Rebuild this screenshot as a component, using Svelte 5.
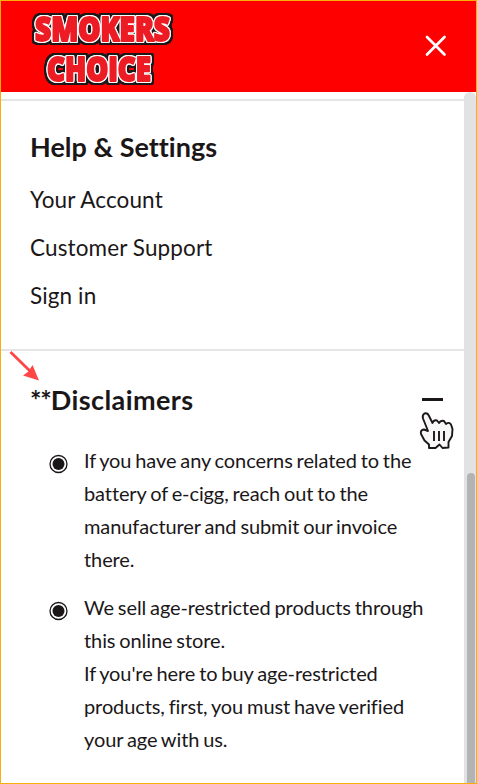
<script>
  const links = ["Your Account", "Customer Support", "Sign in"];

  const disclaimers = [
    [
      "If you have any concerns related to the",
      "battery of e-cigg, reach out to the",
      "manufacturer and submit our invoice",
      "there.",
    ],
    [
      "We sell age-restricted products through",
      "this online store.",
      "If you're here to buy age-restricted",
      "products, first, you must have verified",
      "your age with us.",
    ],
  ];

  let expanded = $state(true);
</script>

<div class="drawer">
  <header class="drawer__header">
    <svg class="logo" width="144" height="78" viewBox="0 0 144 78" role="img" aria-label="Smokers Choice">
      <text x="5" y="31.5" textLength="135" lengthAdjust="spacingAndGlyphs">SMOKERS</text>
      <text x="17" y="71.5" textLength="104" lengthAdjust="spacingAndGlyphs">CHOICE</text>
    </svg>
    <button class="close" aria-label="Close menu">
      <svg width="22" height="22" viewBox="0 0 22 22">
        <path d="M2 2l17.500 17.500M19.500 2L2 19.500" />
      </svg>
    </button>
  </header>

  <div class="drawer__body">
    <div class="content">
      <nav class="section section--help">
        <h2>Help &amp; Settings</h2>
        <ul class="links">
          {#each links as link}
            <li><a href="#menu">{link}</a></li>
          {/each}
        </ul>
      </nav>

      <section class="section section--disclaimers">
        <svg class="arrow" width="34" height="34" viewBox="0 0 34 34" aria-hidden="true">
          <path d="M2.500 2L23 22" fill="none" stroke="#ff4545" stroke-width="2.8" />
          <path d="M31 30.500L15 25.500L20.500 21.500L24.500 15Z" fill="#ff4545" />
        </svg>
        <button class="toggle" aria-expanded={expanded} onclick={() => (expanded = !expanded)}>
          <span class="toggle__title"><span class="toggle__mark">**</span>Disclaimers</span>
          <span class="toggle__minus"></span>
        </button>
        <svg class="pointer" width="36" height="40" viewBox="0 0 36 40" aria-hidden="true">
          <path
            class="pointer__hand"
            d="M10 37V33.500L5.500 29.500L2 23Q1 19 5 18.500L9 20L4 7.500Q3 4 5.500 2.500Q8.500 1.500 10 5L13.500 12Q15 8.500 18 9.500L20 12Q21.500 9 25 10L27 13Q30 10.500 32 13.500L33.500 18L33 25L29.500 31V36.500L23.500 37L20.500 33.500L16.500 37Z"
          />
          <path class="pointer__lines" d="M15 20V30M20 20V30M25 20V30" />
        </svg>

        {#if expanded}
          <ul class="disclaimers">
            {#each disclaimers as lines}
              <li>
                <svg class="bullet" width="20" height="20" viewBox="0 0 20 20" aria-hidden="true">
                  <circle cx="10.5" cy="10" r="8.5" fill="none" stroke="#1b1719" stroke-width="1.3" />
                  <circle cx="10.5" cy="10" r="6" fill="#1b1719" />
                </svg>
                <p>
                  {#each lines as line}
                    <span>{line}</span>
                  {/each}
                </p>
              </li>
            {/each}
          </ul>
        {/if}
      </section>
    </div>

    <div class="scrollbar">
      <div class="scrollbar__thumb"></div>
    </div>
  </div>
</div>

<style>
  :global(body) {
    margin: 0;
    background: #fff;
  }

  .drawer {
    box-sizing: border-box;
    display: flex;
    flex-direction: column;
    width: 477px;
    height: 784px;
    overflow: hidden;
    border: 1px solid #faae08;
    background: #fff;
    color: #1b1719;
    font-family: Lato, "Liberation Sans", sans-serif;
  }

  .drawer__header {
    box-sizing: border-box;
    display: flex;
    flex: none;
    justify-content: space-between;
    align-items: flex-start;
    height: 91px;
    padding: 8px 28px 0 29px;
    background: #f00;
  }

  /* white rim first, then the dark outline around it */
  .logo {
    display: block;
    overflow: visible;
    fill: #ed1c24;
    stroke: #ed1c24;
    stroke-width: 2px;
    stroke-linejoin: round;
    font-family: "Open Sans", "Liberation Sans", sans-serif;
    font-size: 33px;
    font-weight: 800;
    filter: drop-shadow(1px 0 #fff) drop-shadow(-1px 0 #fff) drop-shadow(0 1px #fff)
      drop-shadow(0 -1px #fff) drop-shadow(2px 0 #1d1719) drop-shadow(-2px 0 #1d1719)
      drop-shadow(0 2px #1d1719) drop-shadow(0 -2px #1d1719);
  }

  button {
    padding: 0;
    border: 0;
    background: none;
    color: inherit;
    font: inherit;
    cursor: pointer;
  }

  .close {
    margin-top: 26px;
    margin-right: 1px;
    height: 22px;
  }

  .close svg {
    display: block;
    fill: none;
    stroke: #fff;
    stroke-width: 2.7;
    stroke-linecap: round;
  }

  .drawer__body {
    display: flex;
    flex: 1;
    min-height: 0;
  }

  .content {
    flex: 1;
    padding-top: 7px;
  }

  .section {
    box-sizing: border-box;
    border-top: 2px solid #e5e5e5;
    padding: 0 21px 0 29px;
  }

  .section--help {
    height: 250px;
    padding-top: 30px;
  }

  .section--disclaimers {
    position: relative;
    padding-top: 33px;
  }

  h2,
  .toggle__title {
    margin: 0;
    font-size: 27px;
    font-weight: 700;
    line-height: 32px;
  }

  h2 {
    letter-spacing: 0.02px;
  }

  .toggle__title {
    letter-spacing: 0.42px;
  }

  .toggle__mark {
    letter-spacing: -1.1px;
  }

  ul {
    list-style: none;
    margin: 0;
    padding: 0;
  }

  .links {
    margin-top: 13px;
  }

  .links li {
    height: 48px;
    line-height: 48px;
    font-size: 22.5px;
    letter-spacing: 0.12px;
  }

  .links a {
    color: inherit;
    text-decoration: none;
  }

  .toggle {
    display: flex;
    justify-content: space-between;
    align-items: center;
    width: 100%;
    height: 32px;
  }

  .toggle__minus {
    width: 21px;
    height: 3px;
    margin-top: -2px;
    background: #1b1719;
  }

  .arrow {
    position: absolute;
    top: -1px;
    left: 7px;
  }

  .pointer {
    position: absolute;
    top: 60px;
    left: 418px;
    stroke: #1b1719;
    stroke-linejoin: round;
  }

  .pointer__hand {
    fill: #f7f7f7;
    stroke-width: 1.9;
  }

  .pointer__lines {
    stroke-width: 1.9;
  }

  .disclaimers {
    display: grid;
    gap: 15px;
    margin-top: 28px;
    padding-left: 18px;
  }

  .disclaimers li {
    display: grid;
    grid-template-columns: 20px 1fr;
    column-gap: 16px;
  }

  .bullet {
    margin-top: 10px;
  }

  .disclaimers p {
    margin: 0;
    font-size: 20px;
    line-height: 33px;
    letter-spacing: -0.1px;
    word-spacing: -1.1px;
    white-space: nowrap;
  }

  .disclaimers span {
    display: block;
  }

  .scrollbar {
    box-sizing: border-box;
    flex: none;
    width: 12px;
    padding: 381px 1px 0 3px;
    border-radius: 6px 6px 0 0;
    background: #e2e2e2;
  }

  .scrollbar__thumb {
    height: 100%;
    border-radius: 4px 4px 0 0;
    background: #b3b3b3;
  }
</style>
